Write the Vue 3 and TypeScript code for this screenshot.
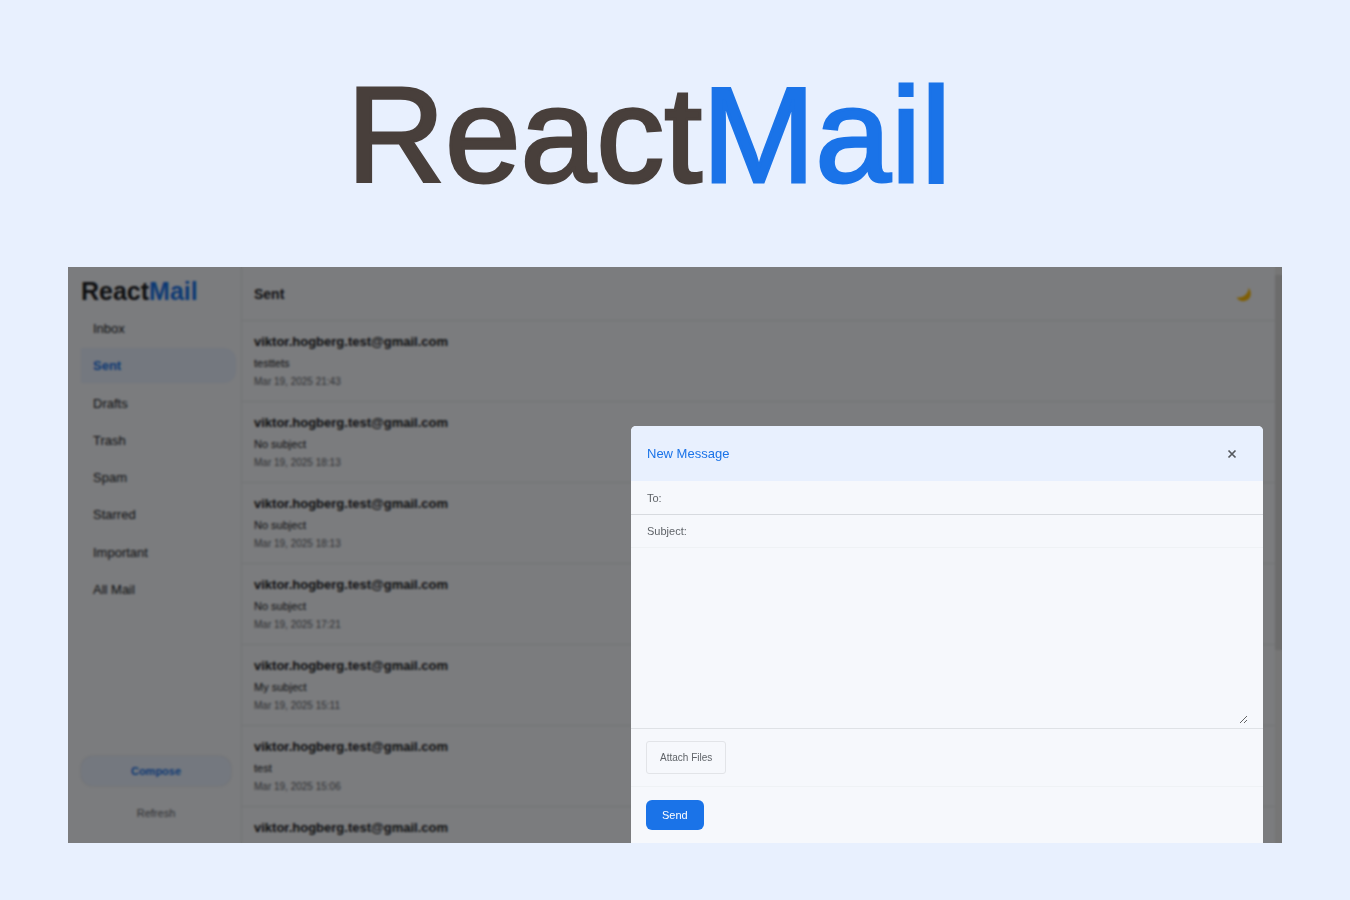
<script setup lang="ts">
import { ref } from 'vue'

interface Mail {
  from: string
  subject: string
  date: string
}

const folders: string[] = ['Inbox', 'Sent', 'Drafts', 'Trash', 'Spam', 'Starred', 'Important', 'All Mail']
const active = ref('Sent')

const sender = 'viktor.hogberg.test@gmail.com'
const mails: Mail[] = [
  { from: sender, subject: 'testtets', date: 'Mar 19, 2025 21:43' },
  { from: sender, subject: 'No subject', date: 'Mar 19, 2025 18:13' },
  { from: sender, subject: 'No subject', date: 'Mar 19, 2025 18:13' },
  { from: sender, subject: 'No subject', date: 'Mar 19, 2025 17:21' },
  { from: sender, subject: 'My subject', date: 'Mar 19, 2025 15:11' },
  { from: sender, subject: 'test', date: 'Mar 19, 2025 15:06' },
  { from: sender, subject: '', date: '' },
]

const to = ref('')
const subject = ref('')
const body = ref('')
</script>

<template>
  <div class="page">
    <h1 class="hero">React<span>Mail</span></h1>

    <main class="frame">
      <div class="app">
        <aside class="sidebar">
          <h2 class="logo">React<span>Mail</span></h2>
          <nav class="folders">
            <a
              v-for="f in folders"
              :key="f"
              href="#"
              :class="['folder', { active: f === active }]"
              @click.prevent="active = f"
            >{{ f }}</a>
          </nav>
          <div class="actions">
            <button type="button" class="compose">Compose</button>
            <button type="button" class="refresh">Refresh</button>
          </div>
        </aside>

        <section class="content">
          <header class="bar">
            <h3>{{ active }}</h3>
            <button type="button" class="theme" aria-label="Toggle dark mode">
              <svg viewBox="0 0 16 16" width="16" height="16">
                <path d="M12.6 1.800C16 6 15.400 11.400 11.400 14C7.800 16.200 2.800 15.200 0.600 11.400C4.200 12 7.600 11 9.800 8.600C11.600 6.600 12.600 4.400 12.600 1.800Z" fill="#ffbe0a" />
              </svg>
            </button>
          </header>
          <ul class="mails">
            <li v-for="(m, i) in mails" :key="i" class="mail">
              <strong>{{ m.from }}</strong>
              <span class="subject">{{ m.subject }}</span>
              <time>{{ m.date }}</time>
            </li>
          </ul>
        </section>

        <div class="scrollbar" aria-hidden="true"><div class="thumb"></div></div>
      </div>

      <div class="overlay">
        <form class="modal" @submit.prevent>
          <header class="modal-head">
            <h4>New Message</h4>
            <button type="button" class="close" aria-label="Close">
              <svg viewBox="0 0 10 10" width="10" height="10">
                <path d="M1.500 1.500L8.500 8.500M8.500 1.500L1.500 8.500" stroke="#55595e" stroke-width="1.700" fill="none" />
              </svg>
            </button>
          </header>
          <div class="field to">
            <label for="to">To:</label>
            <input id="to" v-model="to" type="text" />
          </div>
          <div class="field">
            <label for="subject">Subject:</label>
            <input id="subject" v-model="subject" type="text" />
          </div>
          <div class="body">
            <textarea v-model="body" aria-label="Message body"></textarea>
          </div>
          <div class="attach">
            <button type="button">Attach Files</button>
          </div>
          <div class="send">
            <button type="submit">Send</button>
          </div>
        </form>
      </div>
    </main>
  </div>
</template>

<style>
body {
  background: #e8f0fe;
}
</style>

<style scoped>
* {
  box-sizing: border-box;
}

.page {
  min-height: 100vh;
  padding: 0 68px 57px;
  background: #e8f0fe;
  font-family: "Liberation Sans", Arial, sans-serif;
  color: #202124;
}

h1, h2, h3, h4, ul {
  margin: 0;
  padding: 0;
}

button {
  font-family: inherit;
  border: 0;
  background: none;
  padding: 0;
  cursor: pointer;
}

.hero {
  padding: 55px 52px 52px 0;
  text-align: center;
  font-size: 136px;
  line-height: 160px;
  font-weight: 400;
  color: #483f3b;
  -webkit-text-stroke: 3px #483f3b;
}

.hero span {
  color: #1a73e8;
  -webkit-text-stroke-color: #1a73e8;
}

.frame {
  position: relative;
  height: 64vh;
  overflow: hidden;
  background: #f6f8fc;
}

.app {
  display: flex;
  height: 100%;
}

.sidebar {
  display: flex;
  flex-direction: column;
  width: 174px;
  flex: none;
  padding: 10px 5px 15px 13px;
  border-right: 1px solid #e4e7ea;
}

.logo {
  font-size: 25px;
  line-height: 29px;
}

.logo span {
  color: #1a73e8;
}

.folders {
  display: flex;
  flex-direction: column;
  justify-content: space-between;
  height: 296px;
  margin-top: 5px;
}

.folder {
  padding-left: 12px;
  font-size: 13px;
  line-height: 35px;
  color: #202124;
  text-decoration: none;
  border-radius: 0 12px 12px 0;
}

.folder.active {
  background: #e8f0fe;
  color: #1a73e8;
  font-weight: 700;
}

.actions {
  display: flex;
  flex-direction: column;
  gap: 12px;
  margin-top: auto;
  padding-right: 5px;
}

.actions button {
  height: 30px;
  font-size: 11px;
}

.compose {
  border-radius: 12px;
  background: #e8f0fe;
  color: #1a73e8;
  font-weight: 700;
  box-shadow: 0 0 2px rgba(0, 0, 0, 0.15);
}

.refresh {
  color: #5f6368;
}

.content {
  flex: 1;
  min-width: 0;
}

.bar {
  display: flex;
  align-items: center;
  justify-content: space-between;
  height: 54px;
  padding: 0 23px 0 12px;
  border-bottom: 1px solid #e4e7ea;
}

.bar h3 {
  font-size: 14px;
  line-height: 18px;
}

.theme {
  display: flex;
}

.mails {
  list-style: none;
}

.mail {
  display: flex;
  flex-direction: column;
  height: 81px;
  padding: 12px 12px 0;
  border-bottom: 1px solid #e4e7ea;
}

.mail strong {
  font-size: 13px;
  line-height: 18px;
}

.subject {
  margin-top: 4px;
  font-size: 11px;
  line-height: 16px;
}

.mail time {
  margin-top: 4px;
  font-size: 10px;
  line-height: 14px;
  color: #5f6368;
}

.scrollbar {
  width: 7px;
  padding: 8px 0;
  background: #ececec;
}

.thumb {
  height: 67%;
  background: #d8d8d8;
}

.overlay {
  position: absolute;
  inset: 0;
  display: flex;
  justify-content: flex-end;
  align-items: flex-end;
  padding-right: 19px;
  background: rgba(0, 0, 0, 0.5);
  backdrop-filter: blur(1px);
}

.modal {
  width: 632px;
  max-width: 100%;
  background: #f6f8fc;
  border-radius: 5px 5px 0 0;
  overflow: hidden;
}

.modal-head {
  display: flex;
  align-items: center;
  justify-content: space-between;
  height: 55px;
  padding: 0 26px 0 16px;
  background: #e8f0fe;
}

.modal-head h4 {
  font-size: 13px;
  font-weight: 400;
  color: #1a73e8;
}

.close {
  display: flex;
}

.field {
  display: flex;
  align-items: center;
  gap: 8px;
  height: 33px;
  padding: 0 16px;
  border-bottom: 1px solid #eff2f5;
}

.field.to {
  height: 34px;
  border-color: #d7dadf;
}

.field label {
  font-size: 11px;
  color: #5f6368;
}

.field input {
  flex: 1;
  min-width: 0;
  border: 0;
  outline: 0;
  background: transparent;
  font: inherit;
  font-size: 11px;
}

.body {
  padding: 12px 15px 4px 16px;
  border-bottom: 1px solid #dfe2e6;
}

.body textarea {
  display: block;
  width: 100%;
  height: 164px;
  padding: 0;
  border: 0;
  outline: 0;
  resize: vertical;
  background: transparent;
  font: inherit;
  font-size: 11px;
}

.attach {
  padding: 12px 15px;
  border-bottom: 1px solid #eff2f5;
}

.attach button {
  display: block;
  height: 33px;
  padding: 0 13px;
  border: 1px solid #e2e4e8;
  border-radius: 3px;
  font-size: 10px;
  color: #5f6368;
}

.send {
  padding: 13px 15px;
}

.send button {
  display: block;
  height: 30px;
  padding: 0 16px;
  border-radius: 6px;
  background: #1a73e8;
  color: #fff;
  font-size: 11px;
}
</style>
